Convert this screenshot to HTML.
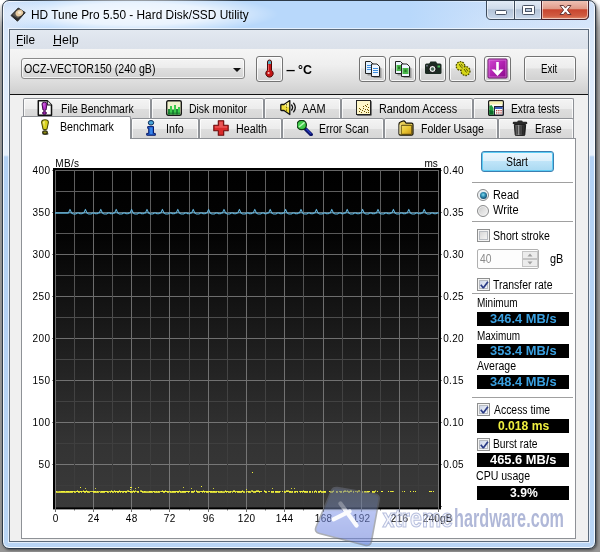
<!DOCTYPE html>
<html lang="en">
<head>
<meta charset="utf-8">
<title>HD Tune Pro 5.50 - Hard Disk/SSD Utility</title>
<style>
*{box-sizing:border-box;margin:0;padding:0}
html,body{width:600px;height:552px;overflow:hidden}
body{position:relative;background:#fff;font-family:"Liberation Sans",sans-serif;font-size:12px;color:#000;line-height:14px}
.abs,#stage div,#stage span{position:absolute}
#stage{position:absolute;left:0;top:0;width:600px;height:552px;overflow:hidden;will-change:transform;background:linear-gradient(180deg,#fff 0,#fff 3px,#d2d2d2 12px,#adadad 28px,#9e9e9e 60px,#969696 100%)}
#win{left:2px;top:0;width:594px;height:549px;border:1px solid #2c3947;border-radius:7px;
 background:linear-gradient(180deg,#cfe1f9 0,#d8e7fa 30px,#e6f0fc 154px,#b3d1f4 156px,#b9d5f5 100%);
 box-shadow:inset 0 0 0 1px rgba(255,255,255,.8), 1px 1px 3px 0 rgba(0,0,0,.55)}
#tbar{left:9px;top:1px;width:580px;height:28px;background:linear-gradient(90deg,rgba(184,216,251,0) 0,#b8d8fb 40px,#b8d8fb 400px,rgba(184,216,251,.3) 480px,rgba(184,216,251,0) 100%)}
#glow{left:0px;top:-6px;width:290px;height:40px;background:radial-gradient(ellipse 50% 50% at 46% 50%,rgba(255,255,255,.85) 0,rgba(255,255,255,.7) 55%,rgba(255,255,255,0) 100%)}
.t{white-space:nowrap;font-size:12px;line-height:14px;transform-origin:0 0;color:#000}
.t u{text-decoration:underline;text-underline-offset:1px;text-decoration-thickness:1px}
#client{left:9px;top:29px;width:580px;height:513px;border:1px solid #5d6b7b;background:#f0f0f0;box-shadow:0 0 0 1px rgba(255,255,255,.6)}
#menubar{left:10px;top:30px;width:578px;height:19px;background:linear-gradient(180deg,#e3e9f1 0,#dde3ec 60%,#dbe1ea 100%)}
#toolbar{left:10px;top:49px;width:578px;height:45px;background:linear-gradient(180deg,#f5f5f5 0,#efefef 35%,#dcdcdc 75%,#cfcfcf 100%)}
#tbline{left:10px;top:94px;width:578px;height:1px;background:#111}
#combo{left:21px;top:58px;width:224px;height:21px;border:1px solid #8a8a8a;border-radius:3px;
 background:linear-gradient(180deg,#f4f4f4 0,#ececec 45%,#dfdfdf 50%,#d4d4d4 100%);box-shadow:inset 0 0 0 1px rgba(255,255,255,.7)}
#combo i{position:absolute;right:3.5px;top:8.5px;width:0;height:0;border-left:4px solid transparent;border-right:4px solid transparent;border-top:4.5px solid #111}
.btn{top:56px;width:27px;height:26px;border:1px solid #737373;border-radius:3px;background:linear-gradient(180deg,#f4f4f4 0,#ededed 45%,#dedede 50%,#d0d0d0 100%);box-shadow:inset 0 0 0 1px rgba(255,255,255,.8)}
.tab{border:1px solid #8e9196;border-bottom:none;border-radius:2px 2px 0 0;background:linear-gradient(180deg,#f4f4f4 0,#ececec 48%,#dddddd 52%,#d6d6d6 100%);box-shadow:inset 1px 1px 0 rgba(255,255,255,.8),inset -1px 0 0 rgba(255,255,255,.8)}
.tab.sel{background:#fff;box-shadow:none}
#panel{left:21px;top:138px;width:555px;height:401px;border:1px solid #8e9196;background:#fff}
.ax{font-size:10px;line-height:12px;white-space:nowrap;color:#000}
.sep{height:1px;left:472px;width:101px;background:#a0a0a0}
.val{left:477px;width:92px;height:14px;background:#000}
.cb{left:477px;width:13px;height:13px;border:1px solid #8e8f8f;background:linear-gradient(135deg,#cfcfcf 0,#e6e6e6 50%,#fbfbfb 100%);box-shadow:inset 0 0 0 1px #f4f4f4, inset 0 0 0 2px #b8bcc2}
.cb.on{background:linear-gradient(135deg,#c4cce0 0,#e0e6f2 50%,#fbfbfd 100%)}
.cb svg{position:absolute;left:0;top:0}
.rb{left:477px;width:12px;height:12px;border:1px solid #8a8b8c;border-radius:50%;background:linear-gradient(135deg,#c4c4c4 0,#dedede 45%,#f6f6f6 100%);box-shadow:inset 0 0 0 1px #f2f2f2}
#start{left:481px;top:151px;width:73px;height:21px;border:1px solid #3c7fb1;border-radius:3px;
 background:linear-gradient(180deg,#eef7fd 0,#dcf0fb 45%,#bfe4f8 50%,#a9d9f2 100%);box-shadow:inset 0 0 0 1px #5ccdf5}
#exit{left:524px;width:52px}
#spin{left:477px;top:249px;width:62px;height:20px;border:1px solid #b0b0b0;border-radius:2px;background:#fdfdfd}
#wm{left:0;top:0;width:600px;height:552px;z-index:20;pointer-events:none}
</style>
</head>
<body>
<div id="stage">
<div id="win"></div><div id="tbar"></div><div id="glow"></div>

<!-- title bar -->
<svg class="abs" style="left:10px;top:5px" width="18" height="18" viewBox="0 0 18 18">
 <polygon points="1,10.500 8.300,3 15.200,7.600 7.500,16.200" fill="#2b2b2b" stroke="#2b2b2b" stroke-width="1" stroke-linejoin="round"/>
 <polygon points="2.200,10 8.400,3.800 14,7.500 8,13.500" fill="#5a554e"/>
 <ellipse cx="9.300" cy="8" rx="3.900" ry="3.200" fill="#e6caa0" transform="rotate(-30 9.300 8)"/>
 <ellipse cx="9.600" cy="7.600" rx="1.700" ry="1.300" fill="#f8ead2"/>
</svg>
<span class="t" style="left:30.81px;top:8px;transform:scaleX(0.989)">HD Tune Pro 5.50 - Hard Disk/SSD Utility</span>
<svg class="abs" style="left:486px;top:0" width="104" height="21" viewBox="0 0 104 21">
 <defs>
  <linearGradient id="cb1" x1="0" y1="0" x2="0" y2="1"><stop offset="0" stop-color="#e4edf7"/><stop offset="0.45" stop-color="#cfdbea"/><stop offset="0.5" stop-color="#b4c4d8"/><stop offset="1" stop-color="#c9d9ec"/></linearGradient>
  <linearGradient id="cb2" x1="0" y1="0" x2="0" y2="1"><stop offset="0" stop-color="#f0c6ba"/><stop offset="0.45" stop-color="#e09a88"/><stop offset="0.5" stop-color="#c8452e"/><stop offset="0.82" stop-color="#d05c42"/><stop offset="1" stop-color="#e29474"/></linearGradient>
 </defs>
 <path d="M0.5,0 V15 Q0.5,19.5 5,19.5 H98 Q102.5,19.5 102.5,15 V0 Z" fill="url(#cb1)" stroke="#3d4b5c" stroke-width="1"/>
 <path d="M55.5,0 V19.5 H98 Q102.5,19.5 102.5,15 V0 Z" fill="url(#cb2)" stroke="#45202a" stroke-width="1"/>
 <path d="M28.5,0 V19.5" stroke="#3d4b5c" stroke-width="1"/>
 <path d="M1.5,0 V15 Q1.5,18.5 5,18.5 H27.5 V0 M29.5,0 V18.5 H54.5 V0 M56.5,0 V18.5 H98 Q101.5,18.5 101.5,15 V0" fill="none" stroke="rgba(255,255,255,.55)" stroke-width="1"/>
 <path d="M0,0.500 H103" stroke="#2c3947" stroke-width="1"/>
 <rect x="9.5" y="10.5" width="11" height="4" rx="1" fill="#fff" stroke="#4a5566" stroke-width="1"/>
 <rect x="36.5" y="5.5" width="12" height="9" rx="1" fill="#fff" stroke="#4a5566" stroke-width="1"/>
 <rect x="39.5" y="8.5" width="6" height="3" fill="#b8c8dc" stroke="#4a5566" stroke-width="1"/>
 <path d="M74,5.5 h3.5 l2,2.600 l2,-2.600 h3.500 l-3.600,4.500 l3.600,4.500 h-3.500 l-2,-2.600 l-2,2.600 h-3.500 l3.600,-4.500 z" fill="#fff" stroke="#5a2a2a" stroke-width="0.9" stroke-linejoin="round"/>
</svg>

<div id="client"></div>
<div id="menubar"></div>
<span class="t" style="left:16.32px;top:33px;transform:scaleX(0.980)">File</span><div style="left:17px;top:45px;width:6px;height:1px;background:#000"></div>
<span class="t" style="left:52.56px;top:33px;transform:scaleX(1.036)">Help</span><div style="left:53px;top:45px;width:8px;height:1px;background:#000"></div>
<div id="toolbar"></div>
<div id="tbline"></div>

<div id="combo"><i></i></div>
<span class="t" style="left:24.22px;top:62px;transform:scaleX(0.885)">OCZ-VECTOR150 (240 gB)</span>

<div class="btn" style="left:256px">
 <svg width="25" height="24" viewBox="0 0 25 24" style="position:absolute;left:0;top:0">
  <path d="M10.500,5 a2,2 0 0 1 4,0 v8.300 a3.700,3.700 0 1 1 -4,0 z" fill="#c41414" stroke="#4a0606" stroke-width="1"/>
  <path d="M11,5 a1.500,1.500 0 0 1 3,0 v2 h-3 z" fill="#52b0c0"/>
  <path d="M11.500,7.500 v6.500" stroke="#f07878" stroke-width=".9" opacity=".85"/>
  <circle cx="11.600" cy="16" r="1.100" fill="#f8c0c0"/>
 </svg>
</div>
<span class="t" style="left:286.21px;top:63px;transform:scaleX(1.384);font-weight:bold">–</span><span class="t" style="left:298.41px;top:63px;transform:scaleX(1.035);font-weight:bold">°C</span>

<div class="btn" style="left:359px">
 <svg width="25" height="24" viewBox="0 0 25 24" style="position:absolute;left:0;top:0">
  <path d="M6.500,5 h5.500 l2.500,2.500 v10 h-8 z" fill="#222" opacity=".35" transform="translate(1,1)"/>
  <path d="M5.500,4.500 h5 l2.500,2.500 v9.500 h-7.500 z" fill="#e4f2ff" stroke="#222" stroke-width="1"/>
  <path d="M7,8.500 h4.500 M7,10.500 h4.500 M7,12.500 h4.500" stroke="#3f8fe0" stroke-width="1"/>
  <path d="M12.500,8 h5.500 l2.500,2.500 v9.500 h-8 z" fill="#222" opacity=".35" transform="translate(1,1)"/>
  <path d="M11.500,7 h5.500 l2.500,2.500 v10 h-8 z" fill="#eef6ff" stroke="#222" stroke-width="1"/>
  <path d="M13,11.500 h5 M13,13.500 h5 M13,15.500 h5" stroke="#3f8fe0" stroke-width="1"/>
 </svg>
</div>
<div class="btn" style="left:389px">
 <svg width="25" height="24" viewBox="0 0 25 24" style="position:absolute;left:0;top:0">
  <path d="M6.500,5 h5.500 l2.500,2.500 v10 h-8 z" fill="#222" opacity=".35" transform="translate(1,1)"/>
  <path d="M5.500,4.500 h5 l2.500,2.500 v9.500 h-7.500 z" fill="#eef6ff" stroke="#222" stroke-width="1"/>
  <rect x="6.500" y="8" width="5" height="6" fill="#48b848"/>
  <path d="M12.500,8 h5.500 l2.500,2.500 v9.500 h-8 z" fill="#222" opacity=".35" transform="translate(1,1)"/>
  <path d="M11.500,7 h5.500 l2.500,2.500 v10 h-8 z" fill="#eef6ff" stroke="#222" stroke-width="1"/>
  <rect x="12.500" y="11" width="6" height="6" fill="#48b848"/>
  <rect x="14.500" y="12.500" width="2" height="2.500" fill="#2a7a2a"/>
  <rect x="8" y="9.500" width="2" height="2.500" fill="#2a7a2a"/>
 </svg>
</div>
<div class="btn" style="left:419px">
 <svg width="25" height="24" viewBox="0 0 25 24" style="position:absolute;left:0;top:0">
  <rect x="5" y="6.500" width="16.500" height="10.500" rx="1.500" fill="#1c2a22"/>
  <path d="M9,7 l1.500,-2.500 h5.500 l1.500,2.500 z" fill="#1c2a22"/>
  <circle cx="12.500" cy="12" r="3.600" fill="#e8e8e8" stroke="#0a0a0a" stroke-width="1"/>
  <circle cx="12.500" cy="12" r="1.700" fill="#4a6a58"/>
  <rect x="17.500" y="8.500" width="2.500" height="2" fill="#48b858"/>
  <rect x="6" y="8" width="2" height="1.500" fill="#667"/>
 </svg>
</div>
<div class="btn" style="left:449px">
 <svg width="25" height="24" viewBox="0 0 25 24" style="position:absolute;left:0;top:0">
  <circle cx="10.500" cy="9" r="4.300" fill="#d6d614" stroke="#4e4e00" stroke-width="1.300" stroke-dasharray="1.700 1"/>
  <circle cx="15.500" cy="14" r="4.500" fill="#d6d614" stroke="#4e4e00" stroke-width="1.300" stroke-dasharray="1.700 1"/>
  <path d="M9,7 l2.500,3.500 M11,6.500 l2,3 M14,12 l2.500,3.500 M16,11.500 l2,3" stroke="#5a5a00" stroke-width="1"/>
  <circle cx="10.500" cy="9" r="2.800" fill="none" stroke="#eaea50" stroke-width=".8" opacity=".8"/>
 </svg>
</div>
<div class="btn" style="left:484px">
 <svg width="25" height="24" viewBox="0 0 25 24" style="position:absolute;left:0;top:0">
  <defs><linearGradient id="pg" x1="0" y1="0" x2="1" y2="1"><stop offset="0" stop-color="#d248d2"/><stop offset="0.5" stop-color="#b020b0"/><stop offset="1" stop-color="#860a86"/></linearGradient></defs>
  <rect x="3" y="2" width="19" height="19" rx="1" fill="url(#pg)" stroke="#5a0a5a" stroke-width="1"/>
  <rect x="4" y="3" width="17" height="17" fill="none" stroke="#f0a0f0" stroke-width="1" opacity=".55"/>
  <path d="M12.500,5 V15" stroke="#fff" stroke-width="2.600"/>
  <path d="M6.500,12.500 h3.500 l2.500,2.500 l2.500,-2.500 h3.500 l-6,6.500 z" fill="#fff"/>
 </svg>
</div>
<div class="btn" id="exit"></div>
<span class="t" style="left:540.68px;top:62px;transform:scaleX(0.817)">Exit</span>

<div class="tab" style="left:23px;top:98px;width:128px;height:21px"></div>
<svg class="abs" style="left:37px;top:100px" width="16" height="16" viewBox="0 0 16 16"><path d="M1.300,0.800 h9 l4.200,4.200 v10.200 h-13.200 z" fill="#fff" stroke="#111" stroke-width="1.500" stroke-linejoin="round"/>
<path d="M10.300,0.800 v4.200 h4.200" fill="#e4e4e4" stroke="#111" stroke-width="1"/>
<path d="M5,4 Q5,2.200 7.500,2.200 Q10,2.200 10,4 L9,10 Q7.500,10.800 6,10 Z" fill="#b02cc4" stroke="#3c0848" stroke-width="1" stroke-linejoin="round"/>
<path d="M6.400,4 Q6.600,3.200 7.400,3.200 L7.200,8 Z" fill="#e9a8f2"/>
<ellipse cx="7.500" cy="13" rx="1.900" ry="1.400" fill="#9a22ae" stroke="#3c0848" stroke-width="1"/></svg>
<span class="t" style="left:60.53px;top:102px;transform:scaleX(0.871)">File Benchmark</span>
<div class="tab" style="left:151px;top:98px;width:113px;height:21px"></div>
<svg class="abs" style="left:166px;top:100px" width="16" height="16" viewBox="0 0 16 16"><rect x="0.7" y="0.7" width="14.6" height="14.6" rx="1.5" fill="#f0f2cc" stroke="#1a1a1a" stroke-width="1.4"/>
<g fill="#1c8a34"><rect x="2" y="9" width="2" height="5.500"/><rect x="6" y="9.500" width="2" height="5"/><rect x="10" y="9" width="2" height="5.500"/></g>
<g fill="#3ccc4c"><rect x="4" y="6" width="2" height="8.500"/><rect x="8" y="5" width="2" height="9.500"/><rect x="12" y="7" width="2" height="7.500"/></g>
<rect x="1.500" y="12.500" width="13" height="2" fill="#126a28" opacity=".55"/></svg>
<span class="t" style="left:188.73px;top:102px;transform:scaleX(0.869)">Disk monitor</span>
<div class="tab" style="left:264px;top:98px;width:77px;height:21px"></div>
<svg class="abs" style="left:279.5px;top:100px" width="16" height="16" viewBox="0 0 16 16"><path d="M0.800,5.300 q0,-0.800 0.800,-0.800 h2.400 l5.800,-4 v14 l-5.800,-4 h-2.400 q-0.800,0 -0.800,-0.800 z" fill="#f0de3c" stroke="#111" stroke-width="1.300" stroke-linejoin="round"/>
<path d="M4.300,5.200 L8.800,2 V7.500 Z" fill="#faf2a0"/>
<path d="M6.500,4 v8" stroke="#5a5208" stroke-width=".8" stroke-dasharray="1.500 1.200"/>
<path d="M11.600,5 q2,2.500 0,5 M13.600,3.200 q3.400,4.300 0,8.600" fill="none" stroke="#111" stroke-width="1.300" stroke-linecap="round"/></svg>
<span class="t" style="left:301.89px;top:102px;transform:scaleX(0.909)">AAM</span>
<div class="tab" style="left:341px;top:98px;width:132px;height:21px"></div>
<svg class="abs" style="left:356px;top:100px" width="16" height="16" viewBox="0 0 16 16"><rect x="1.200" y="1.200" width="14.300" height="14.300" fill="#111"/>
<rect x="0.500" y="0.500" width="14" height="14" fill="#fdf6c8" stroke="#222" stroke-width="1"/>
<g fill="#6e5200"><rect x="3" y="11" width="1" height="1"/><rect x="4" y="9" width="1" height="1"/><rect x="6" y="10" width="1" height="1"/><rect x="7" y="8" width="1" height="1"/><rect x="9" y="9" width="1" height="1"/><rect x="10" y="6" width="1" height="1"/><rect x="12" y="7" width="1" height="1"/><rect x="11" y="4" width="1" height="1"/><rect x="5" y="12" width="1" height="1"/><rect x="8" y="11" width="1" height="1"/><rect x="12" y="10" width="1" height="1"/><rect x="9" y="5" width="1" height="1"/><rect x="10" y="12" width="1" height="1"/><rect x="7" y="6" width="1" height="1"/><rect x="12" y="12" width="1" height="1"/><rect x="3" y="8" width="1" height="1"/><rect x="11" y="9" width="1" height="1"/></g></svg>
<span class="t" style="left:378.7px;top:102px;transform:scaleX(0.901)">Random Access</span>
<div class="tab" style="left:473px;top:98px;width:101px;height:21px"></div>
<svg class="abs" style="left:488px;top:100px" width="16" height="16" viewBox="0 0 16 16"><rect x="0.700" y="0.700" width="14.600" height="14.600" rx="1" fill="#fdfdf4" stroke="#1a1a1a" stroke-width="1.400"/>
<rect x="1.400" y="1.400" width="13.200" height="3" fill="#f4f0b0"/>
<path d="M1.400,14.600 V6 L3.500,5 L5.500,8 V14.600 Z" fill="#22a040"/>
<path d="M1.400,14.600 V10 L5.500,11 V14.600 Z" fill="#0a6a28"/>
<rect x="6.500" y="6.500" width="8.500" height="8.500" fill="#fff" stroke="#223" stroke-width="1"/>
<rect x="7" y="7" width="7.500" height="2" fill="#3b5fb8"/>
<g fill="#b04040"><rect x="8" y="10" width="1.300" height="1.300"/><rect x="10.200" y="10" width="1.300" height="1.300"/><rect x="12.400" y="10" width="1.300" height="1.300"/><rect x="8" y="12.300" width="1.300" height="1.300"/><rect x="10.200" y="12.300" width="1.300" height="1.300"/><rect x="12.400" y="12.300" width="1.300" height="1.300"/></g></svg>
<span class="t" style="left:510.74px;top:102px;transform:scaleX(0.858)">Extra tests</span>
<div class="tab" style="left:131px;top:118px;width:68px;height:21px"></div>
<svg class="abs" style="left:143px;top:120px" width="16" height="16" viewBox="0 0 16 16"><ellipse cx="8.700" cy="15" rx="4.500" ry="1" fill="#555" opacity=".45"/>
<ellipse cx="8" cy="2.800" rx="2.700" ry="2.300" fill="#49a6d8" stroke="#0a2a5a" stroke-width="1"/>
<path d="M4.700,6.600 h5.800 v6.800 h1.800 v1.800 h-8.600 v-1.800 h2 v-5 h-1 z" fill="#2468d4" stroke="#0a1a6a" stroke-width="1" stroke-linejoin="round"/>
<path d="M7.200,7.600 h2 v6.500 h-2 z" fill="#3b86ea"/></svg>
<span class="t" style="left:165.71px;top:122px;transform:scaleX(0.889)">Info</span>
<div class="tab" style="left:199px;top:118px;width:83px;height:21px"></div>
<svg class="abs" style="left:213px;top:120px" width="16" height="16" viewBox="0 0 16 16"><path d="M5.300,0.800 h5.400 v4.500 h4.500 v5.400 h-4.500 v4.500 h-5.400 v-4.500 h-4.500 v-5.400 h4.500 z" fill="#d92b2b" stroke="#6a0a0a" stroke-width="1.100" stroke-linejoin="round"/>
<path d="M6.200,1.800 h3.600 v4.400 h4.400 v1.500 h-12.400 v-1.500 h4.400 z" fill="#f06a6a" opacity=".7"/></svg>
<span class="t" style="left:235.81px;top:122px;transform:scaleX(0.894)">Health</span>
<div class="tab" style="left:282px;top:118px;width:102px;height:21px"></div>
<svg class="abs" style="left:297px;top:120px" width="16" height="16" viewBox="0 0 16 16"><path d="M8.500,9 L14,14.500" stroke="#0c1466" stroke-width="3.800" stroke-linecap="round"/>
<path d="M9.500,9.300 L13.800,13.600" stroke="#2a3cc0" stroke-width="1.300" stroke-linecap="round"/>
<circle cx="4.700" cy="5" r="4.700" fill="#40cc4a" stroke="#0e3a12" stroke-width="1.300"/>
<path d="M2.500,6.500 L7,2.800" stroke="#b4f4b4" stroke-width="1.600" stroke-linecap="round"/></svg>
<span class="t" style="left:318.73px;top:122px;transform:scaleX(0.869)">Error Scan</span>
<div class="tab" style="left:384px;top:118px;width:114px;height:21px"></div>
<svg class="abs" style="left:398px;top:120px" width="16" height="16" viewBox="0 0 16 16"><defs><linearGradient id="fg" x1="0" y1="0" x2="1" y2="1"><stop offset="0" stop-color="#f6e068"/><stop offset="0.500" stop-color="#e8c430"/><stop offset="1" stop-color="#c8941a"/></linearGradient></defs>
<path d="M1,4 q0,-1.500 1.500,-2 l2.500,-1 q1.400,-0.300 2.200,0.800 l0.900,1.400 h5.400 q1.500,0 1.500,1.500 v9 q0,1.500 -1.500,1.500 h-11 q-1.500,0 -1.500,-1.500 z" fill="#e8cf5a" stroke="#141004" stroke-width="1.200"/>
<rect x="3.200" y="5.300" width="10.600" height="9" rx=".8" fill="url(#fg)" stroke="#4a3a08" stroke-width=".9"/>
<path d="M2,4.500 v9.500" stroke="#fbf4c0" stroke-width="1"/></svg>
<span class="t" style="left:420.73px;top:122px;transform:scaleX(0.872)">Folder Usage</span>
<div class="tab" style="left:498px;top:118px;width:76px;height:21px"></div>
<svg class="abs" style="left:512px;top:120px" width="16" height="16" viewBox="0 0 16 16"><defs><linearGradient id="tr" x1="0" y1="0" x2="1" y2="0"><stop offset="0" stop-color="#2a2a2a"/><stop offset="0.350" stop-color="#9a9a9a"/><stop offset="0.600" stop-color="#4a4a4a"/><stop offset="1" stop-color="#1a1a1a"/></linearGradient></defs>
<path d="M0.800,2.800 q0,-1 1,-1 h3.400 q0.300,-1.300 1.500,-1.300 h2.600 q1.200,0 1.500,1.300 h3.400 q1,0 1,1 v1.200 h-14.400 z" fill="#2a2a2a"/>
<path d="M2.300,4.500 h11.400 l-0.900,10.200 q-0.100,0.900 -1,0.900 h-7.600 q-0.900,0 -1,-0.900 z" fill="url(#tr)" stroke="#111" stroke-width=".9"/>
<path d="M5.300,5.500 v9 M8,5.500 v9 M10.700,5.500 v9" stroke="#1a1a1a" stroke-width=".9" opacity=".8"/></svg>
<span class="t" style="left:534.75px;top:122px;transform:scaleX(0.848)">Erase</span>
<div id="panel"></div>
<div class="tab sel" style="left:21px;top:116px;width:110px;height:23px"></div>
<svg class="abs" style="left:37px;top:118.5px" width="16" height="16" viewBox="0 0 16 16"><ellipse cx="8.400" cy="14.800" rx="3.200" ry="1.400" fill="#5a5a5a" opacity=".8"/>
<path d="M4.600,3.500 Q4.600,0.800 8,0.800 Q11.400,0.800 11.400,3.500 L10,10 Q8,11.200 6,10 Z" fill="#d8d21c" stroke="#4a4a0c" stroke-width="1.100" stroke-linejoin="round"/>
<path d="M6.200,3.200 Q6.500,2 7.600,2 L7.200,8.500 Z" fill="#f6f3a8"/>
<ellipse cx="8" cy="13.500" rx="2.300" ry="1.600" fill="#8e8c12" stroke="#2a2a08" stroke-width="1.200"/></svg>
<span class="t" style="left:59.81px;top:120px;transform:scaleX(0.889)">Benchmark</span>

<svg id="chart" class="abs" width="600" height="552" viewBox="0 0 600 552" style="left:0;top:0">
<defs><linearGradient id="cg" x1="0" y1="0" x2="0" y2="1"><stop offset="0" stop-color="#000"/><stop offset="0.2" stop-color="#040404"/><stop offset="0.5" stop-color="#1c1c1c"/><stop offset="0.8" stop-color="#333"/><stop offset="1" stop-color="#3a3a3a"/></linearGradient><linearGradient id="gma" gradientUnits="userSpaceOnUse" x1="0" y1="170" x2="0" y2="507"><stop offset="0" stop-color="#666"/><stop offset="1" stop-color="#787878"/></linearGradient><linearGradient id="gmi" gradientUnits="userSpaceOnUse" x1="0" y1="170" x2="0" y2="507"><stop offset="0" stop-color="#606060"/><stop offset="0.3" stop-color="#555"/><stop offset="0.6" stop-color="#444"/><stop offset="1" stop-color="#3b3b3b"/></linearGradient></defs>
<rect x="53" y="168" width="388" height="341.4" fill="#000"/>
<rect x="55" y="170" width="384" height="337.4" fill="url(#cg)"/>
<rect x="55" y="170" width="384" height="1" fill="#666666"/><rect x="55" y="191" width="384" height="1" fill="#5e5e5e"/><rect x="55" y="212" width="384" height="1" fill="#686868"/><rect x="55" y="233" width="384" height="1" fill="#595959"/><rect x="55" y="254" width="384" height="1" fill="#6a6a6a"/><rect x="55" y="275" width="384" height="1" fill="#545454"/><rect x="55" y="296" width="384" height="1" fill="#6d6d6d"/><rect x="55" y="317" width="384" height="1" fill="#4d4d4d"/><rect x="55" y="338" width="384" height="1" fill="#6f6f6f"/><rect x="55" y="359" width="384" height="1" fill="#464646"/><rect x="55" y="380" width="384" height="1" fill="#717171"/><rect x="55" y="401" width="384" height="1" fill="#424242"/><rect x="55" y="422" width="384" height="1" fill="#747474"/><rect x="55" y="443" width="384" height="1" fill="#3f3f3f"/><rect x="55" y="464" width="384" height="1" fill="#767676"/><rect x="55" y="485" width="384" height="1" fill="#3c3c3c"/><rect x="55" y="170" width="1" height="337" fill="url(#gma)"/><rect x="74" y="170" width="1" height="337" fill="url(#gmi)"/><rect x="93" y="170" width="1" height="337" fill="url(#gma)"/><rect x="112" y="170" width="1" height="337" fill="url(#gmi)"/><rect x="131" y="170" width="1" height="337" fill="url(#gma)"/><rect x="150" y="170" width="1" height="337" fill="url(#gmi)"/><rect x="169" y="170" width="1" height="337" fill="url(#gma)"/><rect x="189" y="170" width="1" height="337" fill="url(#gmi)"/><rect x="208" y="170" width="1" height="337" fill="url(#gma)"/><rect x="227" y="170" width="1" height="337" fill="url(#gmi)"/><rect x="246" y="170" width="1" height="337" fill="url(#gma)"/><rect x="265" y="170" width="1" height="337" fill="url(#gmi)"/><rect x="284" y="170" width="1" height="337" fill="url(#gma)"/><rect x="303" y="170" width="1" height="337" fill="url(#gmi)"/><rect x="323" y="170" width="1" height="337" fill="url(#gma)"/><rect x="342" y="170" width="1" height="337" fill="url(#gmi)"/><rect x="361" y="170" width="1" height="337" fill="url(#gma)"/><rect x="380" y="170" width="1" height="337" fill="url(#gmi)"/><rect x="399" y="170" width="1" height="337" fill="url(#gma)"/><rect x="418" y="170" width="1" height="337" fill="url(#gmi)"/><rect x="438" y="170" width="1" height="337" fill="url(#gma)"/>
<rect x="52" y="170" width="1" height="1" fill="#888"/><rect x="441" y="170" width="1" height="1" fill="#777"/><rect x="52" y="212" width="1" height="1" fill="#888"/><rect x="441" y="212" width="1" height="1" fill="#777"/><rect x="52" y="254" width="1" height="1" fill="#888"/><rect x="441" y="254" width="1" height="1" fill="#777"/><rect x="52" y="296" width="1" height="1" fill="#888"/><rect x="441" y="296" width="1" height="1" fill="#777"/><rect x="52" y="338" width="1" height="1" fill="#888"/><rect x="441" y="338" width="1" height="1" fill="#777"/><rect x="52" y="380" width="1" height="1" fill="#888"/><rect x="441" y="380" width="1" height="1" fill="#777"/><rect x="52" y="422" width="1" height="1" fill="#888"/><rect x="441" y="422" width="1" height="1" fill="#777"/><rect x="52" y="464" width="1" height="1" fill="#888"/><rect x="441" y="464" width="1" height="1" fill="#777"/><rect x="441" y="506" width="1" height="1" fill="#777"/><rect x="55" y="507" width="1" height="5" fill="#6e6e6e"/><rect x="74" y="509" width="1" height="1.400" fill="#555"/><rect x="93" y="507" width="1" height="5" fill="#6e6e6e"/><rect x="112" y="509" width="1" height="1.400" fill="#555"/><rect x="131" y="507" width="1" height="5" fill="#6e6e6e"/><rect x="150" y="509" width="1" height="1.400" fill="#555"/><rect x="169" y="507" width="1" height="5" fill="#6e6e6e"/><rect x="189" y="509" width="1" height="1.400" fill="#555"/><rect x="208" y="507" width="1" height="5" fill="#6e6e6e"/><rect x="227" y="509" width="1" height="1.400" fill="#555"/><rect x="246" y="507" width="1" height="5" fill="#6e6e6e"/><rect x="265" y="509" width="1" height="1.400" fill="#555"/><rect x="284" y="507" width="1" height="5" fill="#6e6e6e"/><rect x="303" y="509" width="1" height="1.400" fill="#555"/><rect x="323" y="507" width="1" height="5" fill="#6e6e6e"/><rect x="342" y="509" width="1" height="1.400" fill="#555"/><rect x="361" y="507" width="1" height="5" fill="#6e6e6e"/><rect x="380" y="509" width="1" height="1.400" fill="#555"/><rect x="399" y="507" width="1" height="5" fill="#6e6e6e"/><rect x="418" y="509" width="1" height="1.400" fill="#555"/><rect x="438" y="507" width="1" height="5" fill="#6e6e6e"/>
<polyline points="55.0,213.0 68.4,213.0 70.0,209.4 71.6,213.0 73.0,213.9 76.0,213.9 77.0,213.0 79.0,213.0 80.0,213.7 82.0,213.7 82.8,213.0 83.8,213.0 85.4,209.4 87.0,213.0 88.4,213.9 91.4,213.9 92.4,213.0 94.4,213.0 95.4,213.7 97.4,213.7 98.2,213.0 99.2,213.0 100.8,209.4 102.4,213.0 103.8,213.9 106.8,213.9 107.8,213.0 109.8,213.0 110.8,213.7 112.8,213.7 113.6,213.0 114.6,213.0 116.2,209.4 117.8,213.0 119.2,213.9 122.2,213.9 123.2,213.0 125.2,213.0 126.2,213.7 128.2,213.7 129.0,213.0 130.0,213.0 131.6,209.4 133.2,213.0 134.6,213.9 137.6,213.9 138.6,213.0 140.6,213.0 141.6,213.7 143.6,213.7 144.4,213.0 145.4,213.0 147.0,209.4 148.6,213.0 150.0,213.9 153.0,213.9 154.0,213.0 156.0,213.0 157.0,213.7 159.0,213.7 159.8,213.0 160.8,213.0 162.4,209.4 164.0,213.0 165.4,213.9 168.4,213.9 169.4,213.0 171.4,213.0 172.4,213.7 174.4,213.7 175.2,213.0 176.2,213.0 177.8,209.4 179.4,213.0 180.8,213.9 183.8,213.9 184.8,213.0 186.8,213.0 187.8,213.7 189.8,213.7 190.6,213.0 191.6,213.0 193.2,209.4 194.8,213.0 196.2,213.9 199.2,213.9 200.2,213.0 202.2,213.0 203.2,213.7 205.2,213.7 206.0,213.0 207.0,213.0 208.6,209.4 210.2,213.0 211.6,213.9 214.6,213.9 215.6,213.0 217.6,213.0 218.6,213.7 220.6,213.7 221.4,213.0 222.4,213.0 224.0,209.4 225.6,213.0 227.0,213.9 230.0,213.9 231.0,213.0 233.0,213.0 234.0,213.7 236.0,213.7 236.8,213.0 237.8,213.0 239.4,209.4 241.0,213.0 242.4,213.9 245.4,213.9 246.4,213.0 248.4,213.0 249.4,213.7 251.4,213.7 252.2,213.0 253.2,213.0 254.8,209.4 256.4,213.0 257.8,213.9 260.8,213.9 261.8,213.0 263.8,213.0 264.8,213.7 266.8,213.7 267.6,213.0 268.6,213.0 270.2,209.4 271.8,213.0 273.2,213.9 276.2,213.9 277.2,213.0 279.2,213.0 280.2,213.7 282.2,213.7 283.0,213.0 284.0,213.0 285.6,209.4 287.2,213.0 288.6,213.9 291.6,213.9 292.6,213.0 294.6,213.0 295.6,213.7 297.6,213.7 298.4,213.0 299.4,213.0 301.0,209.4 302.6,213.0 304.0,213.9 307.0,213.9 308.0,213.0 310.0,213.0 311.0,213.7 313.0,213.7 313.8,213.0 314.8,213.0 316.4,209.4 318.0,213.0 319.4,213.9 322.4,213.9 323.4,213.0 325.4,213.0 326.4,213.7 328.4,213.7 329.2,213.0 330.2,213.0 331.8,209.4 333.4,213.0 334.8,213.9 337.8,213.9 338.8,213.0 340.8,213.0 341.8,213.7 343.8,213.7 344.6,213.0 345.6,213.0 347.2,209.4 348.8,213.0 350.2,213.9 353.2,213.9 354.2,213.0 356.2,213.0 357.2,213.7 359.2,213.7 360.0,213.0 361.0,213.0 362.6,209.4 364.2,213.0 365.6,213.9 368.6,213.9 369.6,213.0 371.6,213.0 372.6,213.7 374.6,213.7 375.4,213.0 376.4,213.0 378.0,209.4 379.6,213.0 381.0,213.9 384.0,213.9 385.0,213.0 387.0,213.0 388.0,213.7 390.0,213.7 390.8,213.0 391.8,213.0 393.4,209.4 395.0,213.0 396.4,213.9 399.4,213.9 400.4,213.0 402.4,213.0 403.4,213.7 405.4,213.7 406.2,213.0 407.2,213.0 408.8,209.4 410.4,213.0 411.8,213.9 414.8,213.9 415.8,213.0 417.8,213.0 418.8,213.7 420.8,213.7 421.6,213.0 422.6,213.0 424.2,209.4 425.8,213.0 427.2,213.9 430.2,213.9 431.2,213.0 433.2,213.0 434.2,213.7 436.2,213.7 437.0,213.0 438.5,213.0" fill="none" stroke="#62b4dc" stroke-width="1.05" stroke-linejoin="round"/>
<rect x="55" y="212.5" width="384" height="1" fill="#62b4dc" opacity="0.5"/>
<rect x="55" y="212.5" width="13" height="1" fill="#62b4dc" opacity="0.6"/>
<g fill="#f4f43a" shape-rendering="crispEdges"><rect x="252" y="472" width="1" height="1"/><rect x="201" y="486" width="1" height="1"/><rect x="80" y="487" width="1" height="1" opacity="0.8"/><rect x="80" y="487" width="1" height="1" opacity="0.8"/><rect x="130" y="487" width="2" height="1"/><rect x="138" y="487" width="1" height="1" opacity="0.8"/><rect x="183" y="487" width="1" height="1" opacity="0.8"/><rect x="85" y="488" width="1" height="1" opacity="0.8"/><rect x="95" y="488" width="1" height="1" opacity="0.8"/><rect x="135" y="488" width="1" height="1" opacity="0.8"/><rect x="191" y="488" width="1" height="1" opacity="0.8"/><rect x="213" y="488" width="1" height="1" opacity="0.8"/><rect x="272" y="488" width="1" height="1" opacity="0.8"/><rect x="291" y="488" width="1" height="1" opacity="0.8"/><rect x="294" y="488" width="1" height="1" opacity="0.8"/><rect x="130" y="489" width="1" height="1" opacity="0.8"/><rect x="246" y="489" width="1" height="1" opacity="0.8"/><rect x="77" y="490" width="1" height="1" opacity="0.6"/><rect x="83" y="490" width="1" height="1" opacity="0.6"/><rect x="86" y="490" width="1" height="1" opacity="0.6"/><rect x="111" y="490" width="1" height="1" opacity="0.6"/><rect x="114" y="490" width="1" height="1" opacity="0.6"/><rect x="119" y="490" width="1" height="1" opacity="0.6"/><rect x="127" y="490" width="2" height="1" opacity="0.6"/><rect x="133" y="490" width="1" height="1" opacity="0.6"/><rect x="135" y="490" width="1" height="1" opacity="0.6"/><rect x="140" y="490" width="2" height="1" opacity="0.6"/><rect x="162" y="490" width="1" height="1" opacity="0.6"/><rect x="165" y="490" width="1" height="1" opacity="0.6"/><rect x="179" y="490" width="1" height="1" opacity="0.6"/><rect x="194" y="490" width="1" height="1" opacity="0.6"/><rect x="196" y="490" width="1" height="1" opacity="0.6"/><rect x="203" y="490" width="1" height="1" opacity="0.6"/><rect x="225" y="490" width="1" height="1" opacity="0.6"/><rect x="233" y="490" width="2" height="1" opacity="0.6"/><rect x="242" y="490" width="1" height="1" opacity="0.6"/><rect x="251" y="490" width="2" height="1" opacity="0.6"/><rect x="256" y="490" width="3" height="1" opacity="0.6"/><rect x="264" y="490" width="1" height="1" opacity="0.6"/><rect x="286" y="490" width="3" height="1" opacity="0.6"/><rect x="303" y="490" width="1" height="1" opacity="0.6"/><rect x="315" y="490" width="1" height="1" opacity="0.6"/><rect x="320" y="490" width="1" height="1" opacity="0.6"/><rect x="333" y="490" width="1" height="1" opacity="0.6"/><rect x="344" y="490" width="2" height="1" opacity="0.6"/><rect x="347" y="490" width="1" height="1" opacity="0.6"/><rect x="350" y="490" width="2" height="1" opacity="0.6"/><rect x="358" y="490" width="2" height="1" opacity="0.6"/><rect x="375" y="490" width="1" height="1" opacity="0.6"/><rect x="56" y="491" width="1" height="1"/><rect x="57" y="491" width="2" height="1" opacity="0.7"/><rect x="59" y="491" width="2" height="1" opacity="0.85"/><rect x="61" y="491" width="4" height="1"/><rect x="65" y="491" width="1" height="1" opacity="0.7"/><rect x="66" y="491" width="3" height="1"/><rect x="69" y="491" width="1" height="1" opacity="0.85"/><rect x="70" y="491" width="3" height="1"/><rect x="73" y="491" width="1" height="1" opacity="0.85"/><rect x="74" y="491" width="1" height="1"/><rect x="75" y="491" width="1" height="1" opacity="0.7"/><rect x="76" y="491" width="3" height="1"/><rect x="79" y="491" width="1" height="1" opacity="0.85"/><rect x="80" y="491" width="2" height="1"/><rect x="82" y="491" width="1" height="1" opacity="0.7"/><rect x="83" y="491" width="5" height="1"/><rect x="88" y="491" width="1" height="1" opacity="0.85"/><rect x="89" y="491" width="1" height="1" opacity="0.7"/><rect x="90" y="491" width="3" height="1" opacity="0.85"/><rect x="93" y="491" width="3" height="1"/><rect x="96" y="491" width="1" height="1" opacity="0.7"/><rect x="97" y="491" width="1" height="1"/><rect x="98" y="491" width="1" height="1" opacity="0.7"/><rect x="99" y="491" width="1" height="1" opacity="0.85"/><rect x="100" y="491" width="1" height="1" opacity="0.7"/><rect x="101" y="491" width="7" height="1"/><rect x="108" y="491" width="1" height="1" opacity="0.7"/><rect x="109" y="491" width="2" height="1" opacity="0.85"/><rect x="111" y="491" width="2" height="1"/><rect x="113" y="491" width="1" height="1" opacity="0.7"/><rect x="114" y="491" width="8" height="1"/><rect x="122" y="491" width="1" height="1" opacity="0.85"/><rect x="123" y="491" width="4" height="1"/><rect x="127" y="491" width="1" height="1" opacity="0.7"/><rect x="128" y="491" width="4" height="1"/><rect x="132" y="491" width="1" height="1" opacity="0.85"/><rect x="133" y="491" width="2" height="1"/><rect x="135" y="491" width="1" height="1" opacity="0.85"/><rect x="136" y="491" width="1" height="1" opacity="0.7"/><rect x="137" y="491" width="2" height="1"/><rect x="140" y="491" width="1" height="1" opacity="0.7"/><rect x="141" y="491" width="2" height="1"/><rect x="143" y="491" width="1" height="1" opacity="0.7"/><rect x="144" y="491" width="1" height="1"/><rect x="145" y="491" width="1" height="1" opacity="0.85"/><rect x="146" y="491" width="3" height="1" opacity="0.7"/><rect x="149" y="491" width="3" height="1"/><rect x="152" y="491" width="1" height="1" opacity="0.7"/><rect x="153" y="491" width="2" height="1"/><rect x="155" y="491" width="1" height="1" opacity="0.7"/><rect x="156" y="491" width="1" height="1"/><rect x="157" y="491" width="1" height="1" opacity="0.7"/><rect x="158" y="491" width="1" height="1"/><rect x="159" y="491" width="1" height="1" opacity="0.85"/><rect x="160" y="491" width="1" height="1" opacity="0.7"/><rect x="161" y="491" width="7" height="1"/><rect x="168" y="491" width="2" height="1" opacity="0.85"/><rect x="170" y="491" width="1" height="1"/><rect x="171" y="491" width="1" height="1" opacity="0.7"/><rect x="172" y="491" width="7" height="1"/><rect x="179" y="491" width="1" height="1" opacity="0.85"/><rect x="180" y="491" width="1" height="1"/><rect x="181" y="491" width="1" height="1" opacity="0.7"/><rect x="182" y="491" width="8" height="1"/><rect x="191" y="491" width="2" height="1"/><rect x="193" y="491" width="1" height="1" opacity="0.85"/><rect x="194" y="491" width="1" height="1"/><rect x="196" y="491" width="2" height="1"/><rect x="198" y="491" width="3" height="1" opacity="0.85"/><rect x="201" y="491" width="4" height="1"/><rect x="205" y="491" width="1" height="1" opacity="0.85"/><rect x="206" y="491" width="2" height="1"/><rect x="208" y="491" width="1" height="1" opacity="0.85"/><rect x="209" y="491" width="3" height="1"/><rect x="212" y="491" width="1" height="1" opacity="0.85"/><rect x="213" y="491" width="2" height="1"/><rect x="215" y="491" width="1" height="1" opacity="0.85"/><rect x="216" y="491" width="1" height="1"/><rect x="217" y="491" width="1" height="1" opacity="0.7"/><rect x="218" y="491" width="1" height="1"/><rect x="219" y="491" width="1" height="1" opacity="0.7"/><rect x="220" y="491" width="1" height="1" opacity="0.85"/><rect x="221" y="491" width="1" height="1"/><rect x="222" y="491" width="3" height="1" opacity="0.7"/><rect x="225" y="491" width="3" height="1"/><rect x="228" y="491" width="1" height="1" opacity="0.85"/><rect x="229" y="491" width="1" height="1" opacity="0.7"/><rect x="230" y="491" width="1" height="1"/><rect x="231" y="491" width="2" height="1" opacity="0.7"/><rect x="233" y="491" width="2" height="1"/><rect x="235" y="491" width="2" height="1" opacity="0.85"/><rect x="237" y="491" width="3" height="1"/><rect x="240" y="491" width="1" height="1" opacity="0.85"/><rect x="241" y="491" width="2" height="1"/><rect x="243" y="491" width="1" height="1" opacity="0.85"/><rect x="244" y="491" width="1" height="1" opacity="0.7"/><rect x="246" y="491" width="1" height="1"/><rect x="247" y="491" width="1" height="1" opacity="0.7"/><rect x="248" y="491" width="2" height="1"/><rect x="250" y="491" width="2" height="1" opacity="0.7"/><rect x="252" y="491" width="1" height="1"/><rect x="253" y="491" width="2" height="1" opacity="0.85"/><rect x="255" y="491" width="5" height="1"/><rect x="260" y="491" width="1" height="1" opacity="0.85"/><rect x="261" y="491" width="1" height="1"/><rect x="264" y="491" width="2" height="1"/><rect x="266" y="491" width="1" height="1" opacity="0.7"/><rect x="268" y="491" width="2" height="1" opacity="0.85"/><rect x="271" y="491" width="1" height="1"/><rect x="272" y="491" width="1" height="1" opacity="0.85"/><rect x="273" y="491" width="1" height="1"/><rect x="275" y="491" width="3" height="1"/><rect x="278" y="491" width="1" height="1" opacity="0.85"/><rect x="279" y="491" width="1" height="1"/><rect x="280" y="491" width="1" height="1" opacity="0.7"/><rect x="282" y="491" width="1" height="1"/><rect x="284" y="491" width="1" height="1"/><rect x="285" y="491" width="1" height="1" opacity="0.7"/><rect x="286" y="491" width="2" height="1"/><rect x="288" y="491" width="1" height="1" opacity="0.85"/><rect x="289" y="491" width="2" height="1"/><rect x="291" y="491" width="1" height="1" opacity="0.7"/><rect x="292" y="491" width="1" height="1"/><rect x="294" y="491" width="1" height="1" opacity="0.85"/><rect x="295" y="491" width="1" height="1"/><rect x="296" y="491" width="1" height="1" opacity="0.85"/><rect x="297" y="491" width="1" height="1"/><rect x="299" y="491" width="1" height="1" opacity="0.85"/><rect x="300" y="491" width="2" height="1"/><rect x="302" y="491" width="1" height="1" opacity="0.85"/><rect x="303" y="491" width="3" height="1"/><rect x="306" y="491" width="1" height="1" opacity="0.85"/><rect x="307" y="491" width="1" height="1"/><rect x="309" y="491" width="2" height="1"/><rect x="312" y="491" width="1" height="1"/><rect x="314" y="491" width="1" height="1"/><rect x="315" y="491" width="1" height="1" opacity="0.85"/><rect x="316" y="491" width="1" height="1"/><rect x="318" y="491" width="3" height="1"/><rect x="321" y="491" width="1" height="1" opacity="0.85"/><rect x="322" y="491" width="1" height="1" opacity="0.7"/><rect x="323" y="491" width="3" height="1"/><rect x="329" y="491" width="1" height="1"/><rect x="330" y="491" width="1" height="1" opacity="0.85"/><rect x="331" y="491" width="1" height="1" opacity="0.7"/><rect x="332" y="491" width="2" height="1"/><rect x="336" y="491" width="1" height="1"/><rect x="337" y="491" width="1" height="1" opacity="0.85"/><rect x="339" y="491" width="3" height="1"/><rect x="343" y="491" width="3" height="1"/><rect x="346" y="491" width="1" height="1" opacity="0.7"/><rect x="347" y="491" width="1" height="1"/><rect x="348" y="491" width="2" height="1" opacity="0.85"/><rect x="350" y="491" width="2" height="1"/><rect x="353" y="491" width="1" height="1"/><rect x="355" y="491" width="1" height="1"/><rect x="356" y="491" width="1" height="1" opacity="0.7"/><rect x="357" y="491" width="1" height="1"/><rect x="358" y="491" width="2" height="1" opacity="0.85"/><rect x="362" y="491" width="1" height="1" opacity="0.85"/><rect x="364" y="491" width="2" height="1"/><rect x="366" y="491" width="1" height="1" opacity="0.7"/><rect x="367" y="491" width="3" height="1"/><rect x="372" y="491" width="1" height="1"/><rect x="373" y="491" width="2" height="1" opacity="0.85"/><rect x="375" y="491" width="1" height="1" opacity="0.7"/><rect x="377" y="491" width="1" height="1"/><rect x="381" y="491" width="2" height="1"/><rect x="388" y="491" width="1" height="1"/><rect x="390" y="491" width="2" height="1" opacity="0.85"/><rect x="392" y="491" width="1" height="1"/><rect x="393" y="491" width="1" height="1" opacity="0.7"/><rect x="402" y="491" width="1" height="1" opacity="0.7"/><rect x="404" y="491" width="1" height="1"/><rect x="410" y="491" width="1" height="1"/><rect x="413" y="491" width="1" height="1"/><rect x="415" y="491" width="1" height="1"/><rect x="429" y="491" width="1" height="1"/><rect x="430" y="491" width="1" height="1" opacity="0.85"/><rect x="431" y="491" width="1" height="1"/><rect x="433" y="491" width="1" height="1"/><rect x="56" y="492" width="17" height="1" opacity="0.8"/><rect x="74" y="492" width="2" height="1" opacity="0.8"/><rect x="78" y="492" width="2" height="1" opacity="0.8"/><rect x="81" y="492" width="1" height="1" opacity="0.8"/><rect x="84" y="492" width="2" height="1" opacity="0.8"/><rect x="87" y="492" width="3" height="1" opacity="0.8"/><rect x="93" y="492" width="6" height="1" opacity="0.8"/><rect x="100" y="492" width="5" height="1" opacity="0.8"/><rect x="107" y="492" width="2" height="1" opacity="0.8"/><rect x="110" y="492" width="1" height="1" opacity="0.8"/><rect x="112" y="492" width="2" height="1" opacity="0.8"/><rect x="115" y="492" width="1" height="1" opacity="0.8"/><rect x="117" y="492" width="2" height="1" opacity="0.8"/><rect x="120" y="492" width="1" height="1" opacity="0.8"/><rect x="122" y="492" width="2" height="1" opacity="0.8"/><rect x="125" y="492" width="2" height="1" opacity="0.8"/><rect x="130" y="492" width="3" height="1" opacity="0.8"/><rect x="134" y="492" width="1" height="1" opacity="0.8"/><rect x="137" y="492" width="2" height="1" opacity="0.8"/><rect x="142" y="492" width="11" height="1" opacity="0.8"/><rect x="154" y="492" width="6" height="1" opacity="0.8"/><rect x="163" y="492" width="2" height="1" opacity="0.8"/><rect x="167" y="492" width="2" height="1" opacity="0.8"/><rect x="170" y="492" width="6" height="1" opacity="0.8"/><rect x="177" y="492" width="2" height="1" opacity="0.8"/><rect x="180" y="492" width="6" height="1" opacity="0.8"/><rect x="188" y="492" width="1" height="1" opacity="0.8"/><rect x="191" y="492" width="3" height="1" opacity="0.8"/><rect x="197" y="492" width="3" height="1" opacity="0.8"/><rect x="202" y="492" width="1" height="1" opacity="0.8"/><rect x="204" y="492" width="1" height="1" opacity="0.8"/><rect x="206" y="492" width="3" height="1" opacity="0.8"/><rect x="210" y="492" width="7" height="1" opacity="0.8"/><rect x="218" y="492" width="7" height="1" opacity="0.8"/><rect x="226" y="492" width="1" height="1" opacity="0.8"/><rect x="228" y="492" width="3" height="1" opacity="0.8"/><rect x="232" y="492" width="1" height="1" opacity="0.8"/><rect x="235" y="492" width="1" height="1" opacity="0.8"/><rect x="237" y="492" width="5" height="1" opacity="0.8"/><rect x="243" y="492" width="2" height="1" opacity="0.8"/><rect x="246" y="492" width="1" height="1" opacity="0.8"/><rect x="248" y="492" width="3" height="1" opacity="0.8"/><rect x="253" y="492" width="3" height="1" opacity="0.8"/><rect x="259" y="492" width="1" height="1" opacity="0.8"/><rect x="265" y="492" width="2" height="1" opacity="0.8"/><rect x="271" y="492" width="3" height="1" opacity="0.8"/><rect x="275" y="492" width="5" height="1" opacity="0.8"/><rect x="284" y="492" width="2" height="1" opacity="0.8"/><rect x="289" y="492" width="4" height="1" opacity="0.8"/><rect x="294" y="492" width="2" height="1" opacity="0.8"/><rect x="297" y="492" width="1" height="1" opacity="0.8"/><rect x="300" y="492" width="1" height="1" opacity="0.8"/><rect x="302" y="492" width="1" height="1" opacity="0.8"/><rect x="304" y="492" width="4" height="1" opacity="0.8"/><rect x="309" y="492" width="2" height="1" opacity="0.8"/><rect x="312" y="492" width="1" height="1" opacity="0.8"/><rect x="314" y="492" width="1" height="1" opacity="0.8"/><rect x="316" y="492" width="1" height="1" opacity="0.8"/><rect x="318" y="492" width="2" height="1" opacity="0.8"/><rect x="321" y="492" width="5" height="1" opacity="0.8"/><rect x="330" y="492" width="3" height="1" opacity="0.8"/><rect x="336" y="492" width="2" height="1" opacity="0.8"/><rect x="340" y="492" width="2" height="1" opacity="0.8"/><rect x="343" y="492" width="1" height="1" opacity="0.8"/><rect x="348" y="492" width="2" height="1" opacity="0.8"/><rect x="353" y="492" width="1" height="1" opacity="0.8"/><rect x="357" y="492" width="1" height="1" opacity="0.8"/><rect x="362" y="492" width="1" height="1" opacity="0.8"/><rect x="364" y="492" width="5" height="1" opacity="0.8"/><rect x="372" y="492" width="3" height="1" opacity="0.8"/></g>
</svg>
<div class="ax" style="left:20px;top:165px;width:30.4px;text-align:right;letter-spacing:0.4px">400</div>
<div class="ax" style="left:20px;top:207px;width:30.4px;text-align:right;letter-spacing:0.4px">350</div>
<div class="ax" style="left:20px;top:249px;width:30.4px;text-align:right;letter-spacing:0.4px">300</div>
<div class="ax" style="left:20px;top:291px;width:30.4px;text-align:right;letter-spacing:0.4px">250</div>
<div class="ax" style="left:20px;top:333px;width:30.4px;text-align:right;letter-spacing:0.4px">200</div>
<div class="ax" style="left:20px;top:375px;width:30.4px;text-align:right;letter-spacing:0.4px">150</div>
<div class="ax" style="left:20px;top:417px;width:30.4px;text-align:right;letter-spacing:0.4px">100</div>
<div class="ax" style="left:20px;top:459px;width:30.4px;text-align:right;letter-spacing:0.4px">50</div>
<div class="ax" style="left:443.3px;top:165px;letter-spacing:0.25px">0.40</div>
<div class="ax" style="left:443.3px;top:207px;letter-spacing:0.25px">0.35</div>
<div class="ax" style="left:443.3px;top:249px;letter-spacing:0.25px">0.30</div>
<div class="ax" style="left:443.3px;top:291px;letter-spacing:0.25px">0.25</div>
<div class="ax" style="left:443.3px;top:333px;letter-spacing:0.25px">0.20</div>
<div class="ax" style="left:443.3px;top:375px;letter-spacing:0.25px">0.15</div>
<div class="ax" style="left:443.3px;top:417px;letter-spacing:0.25px">0.10</div>
<div class="ax" style="left:443.3px;top:459px;letter-spacing:0.25px">0.05</div>
<div class="ax" style="left:35px;top:513px;width:41.3px;text-align:center;letter-spacing:0.3px">0</div>
<div class="ax" style="left:73px;top:513px;width:41.3px;text-align:center;letter-spacing:0.3px">24</div>
<div class="ax" style="left:111px;top:513px;width:41.3px;text-align:center;letter-spacing:0.3px">48</div>
<div class="ax" style="left:149px;top:513px;width:41.3px;text-align:center;letter-spacing:0.3px">72</div>
<div class="ax" style="left:188px;top:513px;width:41.3px;text-align:center;letter-spacing:0.3px">96</div>
<div class="ax" style="left:226px;top:513px;width:41.3px;text-align:center;letter-spacing:0.3px">120</div>
<div class="ax" style="left:264px;top:513px;width:41.3px;text-align:center;letter-spacing:0.3px">144</div>
<div class="ax" style="left:303px;top:513px;width:41.3px;text-align:center;letter-spacing:0.3px">168</div>
<div class="ax" style="left:341px;top:513px;width:41.3px;text-align:center;letter-spacing:0.3px">192</div>
<div class="ax" style="left:379px;top:513px;width:41.3px;text-align:center;letter-spacing:0.3px">216</div>
<div class="ax" style="left:422.800px;top:513px;letter-spacing:0.150px">240gB</div>
<div class="ax" style="left:55.3px;top:158px;letter-spacing:0.3px">MB/s</div>
<div class="ax" style="left:424.5px;top:158px">ms</div>

<!-- right panel -->
<div id="start"></div>
<span class="t" style="left:505.53px;top:155px;transform:scaleX(0.867)">Start</span>
<div class="sep" style="top:182px"></div>
<div class="rb" style="top:189px;background:#e4eef4"><i style="position:absolute;left:1.5px;top:1.5px;width:7px;height:7px;border-radius:50%;background:radial-gradient(circle at 45% 40%,#8adcee 0,#3a9cc0 30%,#1a5c80 62%,#0c3850 100%)"></i></div>
<span class="t" style="left:492.7px;top:188px;transform:scaleX(0.905)">Read</span>
<div class="rb" style="top:205px"></div>
<span class="t" style="left:492.52px;top:203px;transform:scaleX(0.921)">Write</span>
<div class="sep" style="top:221px"></div>
<div class="cb" style="top:229px"></div>
<span class="t" style="left:492.72px;top:229px;transform:scaleX(0.879)">Short stroke</span>
<div id="spin">
 <svg class="abs" style="left:44px;top:1px" width="16" height="16" viewBox="0 0 16 16">
  <rect x="0.500" y="0.500" width="15" height="7" fill="#ececec" stroke="#c4c4c4"/>
  <rect x="0.500" y="8.500" width="15" height="7" fill="#ececec" stroke="#c4c4c4"/>
  <path d="M5.500,5.500 L8,2.500 L10.500,5.500 Z M5.500,10.500 L8,13.500 L10.500,10.500 Z" fill="#a0a0a0"/>
 </svg>
</div>
<span class="t" style="left:480.43px;top:252px;transform:scaleX(0.859);color:#8a8a8a">40</span>
<span class="t" style="left:549.58px;top:252px;transform:scaleX(0.908)">gB</span>
<div class="cb on" style="top:278px"><svg width="13" height="13" viewBox="0 0 13 13"><path d="M2.800,5.800 L5.300,9 L9.900,2.700" fill="none" stroke="#2c3c86" stroke-width="1.700" stroke-linejoin="bevel"/></svg></div>
<span class="t" style="left:493.45px;top:278px;transform:scaleX(0.871)">Transfer rate</span>
<div class="sep" style="top:293px"></div>
<span class="t" style="left:476.97px;top:296px;transform:scaleX(0.834)">Minimum</span>
<div class="val" style="top:312px"></div>
<span class="t" style="left:489.9px;top:312px;transform:scaleX(1.073);font-weight:bold;color:#3aa0e0">346.4 MB/s</span>
<span class="t" style="left:477.37px;top:329px;transform:scaleX(0.830)">Maximum</span>
<div class="val" style="top:344px"></div>
<span class="t" style="left:489.9px;top:344px;transform:scaleX(1.073);font-weight:bold;color:#3aa0e0">353.4 MB/s</span>
<span class="t" style="left:477.19px;top:359px;transform:scaleX(0.878)">Average</span>
<div class="val" style="top:375px"></div>
<span class="t" style="left:489.9px;top:375px;transform:scaleX(1.073);font-weight:bold;color:#3aa0e0">348.4 MB/s</span>
<div class="sep" style="top:397px"></div>
<div class="cb on" style="top:403px"><svg width="13" height="13" viewBox="0 0 13 13"><path d="M2.800,5.800 L5.300,9 L9.900,2.700" fill="none" stroke="#2c3c86" stroke-width="1.700" stroke-linejoin="bevel"/></svg></div>
<span class="t" style="left:493.69px;top:403px;transform:scaleX(0.867)">Access time</span>
<div class="val" style="top:419px"></div>
<span class="t" style="left:498.37px;top:419px;transform:scaleX(1.009);font-weight:bold;color:#f0f040">0.018 ms</span>
<div class="cb on" style="top:438px"><svg width="13" height="13" viewBox="0 0 13 13"><path d="M2.800,5.800 L5.300,9 L9.900,2.700" fill="none" stroke="#2c3c86" stroke-width="1.700" stroke-linejoin="bevel"/></svg></div>
<span class="t" style="left:492.94px;top:437px;transform:scaleX(0.855)">Burst rate</span>
<div class="val" style="top:453px"></div>
<span class="t" style="left:490.1px;top:453px;transform:scaleX(1.070);font-weight:bold;color:#fff">465.6 MB/s</span>
<span class="t" style="left:476.48px;top:469px;transform:scaleX(0.880)">CPU usage</span>
<div class="val" style="top:486px"></div>
<span class="t" style="left:510.13px;top:486px;transform:scaleX(1.014);font-weight:bold;color:#fff">3.9%</span>

<!-- watermark -->
<svg id="wm" class="abs" width="600" height="552" viewBox="0 0 600 552">
 <defs><linearGradient id="wg" x1="0" y1="0" x2="0" y2="1"><stop offset="0" stop-color="#6c7690"/><stop offset="0.36" stop-color="#7080a8"/><stop offset="0.42" stop-color="#8499ea"/><stop offset="1" stop-color="#667cd8"/></linearGradient>
 <linearGradient id="wx" gradientUnits="userSpaceOnUse" x1="0" y1="500" x2="0" y2="511"><stop offset="0" stop-color="#fff" stop-opacity=".25"/><stop offset="0.7" stop-color="#fff" stop-opacity=".3"/><stop offset="1" stop-color="#fff" stop-opacity=".95"/></linearGradient></defs>
 <path opacity="0.56" d="M337.500,487.600 L375,494 Q380,495 379,500 L371.500,541 Q370.500,546.500 365,545.300 L319.500,533.500 Q314,532 316,527 L331.500,490.500 Q333,487 337.500,487.600 Z" fill="url(#wg)" stroke="#6a6f7c" stroke-width="1.600" stroke-linejoin="round"/>
 <path d="M340.500,503.500 L356.500,525.500 M349.500,511.300 L333.500,519.300" fill="none" stroke="url(#wx)" stroke-width="4.200" stroke-linecap="round"/>
 <g font-family="'Liberation Sans',sans-serif" font-weight="bold" font-size="25">
  <text x="382.500" y="527" textLength="70.500" lengthAdjust="spacingAndGlyphs" fill="#e8ecf8" fill-opacity="0.35" stroke="#8a98c8" stroke-opacity="0.6" stroke-width="1.100">xtreme</text>
  <text x="454" y="527" textLength="110" lengthAdjust="spacingAndGlyphs" fill="#7f8dc0" fill-opacity="0.62">hardware.com</text>
 </g>
</svg>
</div>
</body>
</html>
